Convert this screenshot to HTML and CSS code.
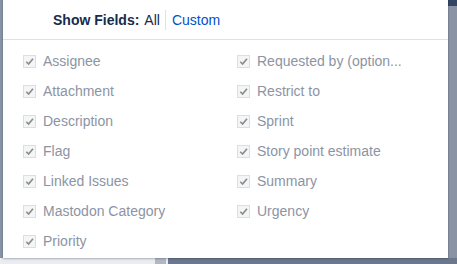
FILE: index.html
```html
<!DOCTYPE html>
<html lang="en">
<head>
  <meta charset="UTF-8" />
  <title>Show Fields</title>
  <link rel="stylesheet" href="styles.css">
</head>
<body>
  <div class="popup">
    <div class="header">
      <span class="label">Show Fields:</span>
      <span class="opt">All</span>
      <span class="sep"></span>
      <a class="opt link">Custom</a>
    </div>
    <div class="fields">
      <label class="field"><span class="box"><svg viewBox="0 0 12 12"><path d="M2.5 6.3 L5 8.8 L9.8 3" /></svg></span><span class="name">Assignee</span></label>
      <label class="field"><span class="box"><svg viewBox="0 0 12 12"><path d="M2.5 6.3 L5 8.8 L9.8 3" /></svg></span><span class="name" title="Requested by (optional)">Requested by (option...</span></label>
      <label class="field"><span class="box"><svg viewBox="0 0 12 12"><path d="M2.5 6.3 L5 8.8 L9.8 3" /></svg></span><span class="name">Attachment</span></label>
      <label class="field"><span class="box"><svg viewBox="0 0 12 12"><path d="M2.5 6.3 L5 8.8 L9.8 3" /></svg></span><span class="name">Restrict to</span></label>
      <label class="field"><span class="box"><svg viewBox="0 0 12 12"><path d="M2.5 6.3 L5 8.8 L9.8 3" /></svg></span><span class="name">Description</span></label>
      <label class="field"><span class="box"><svg viewBox="0 0 12 12"><path d="M2.5 6.3 L5 8.8 L9.8 3" /></svg></span><span class="name">Sprint</span></label>
      <label class="field"><span class="box"><svg viewBox="0 0 12 12"><path d="M2.5 6.3 L5 8.8 L9.8 3" /></svg></span><span class="name">Flag</span></label>
      <label class="field"><span class="box"><svg viewBox="0 0 12 12"><path d="M2.5 6.3 L5 8.8 L9.8 3" /></svg></span><span class="name">Story point estimate</span></label>
      <label class="field"><span class="box"><svg viewBox="0 0 12 12"><path d="M2.5 6.3 L5 8.8 L9.8 3" /></svg></span><span class="name">Linked Issues</span></label>
      <label class="field"><span class="box"><svg viewBox="0 0 12 12"><path d="M2.5 6.3 L5 8.8 L9.8 3" /></svg></span><span class="name">Summary</span></label>
      <label class="field"><span class="box"><svg viewBox="0 0 12 12"><path d="M2.5 6.3 L5 8.8 L9.8 3" /></svg></span><span class="name">Mastodon Category</span></label>
      <label class="field"><span class="box"><svg viewBox="0 0 12 12"><path d="M2.5 6.3 L5 8.8 L9.8 3" /></svg></span><span class="name">Urgency</span></label>
      <label class="field"><span class="box"><svg viewBox="0 0 12 12"><path d="M2.5 6.3 L5 8.8 L9.8 3" /></svg></span><span class="name">Priority</span></label>
    </div>
  </div>
</body>
</html>
```

FILE: styles.css
```css
body {
  margin: 0;
  height: 264px;
  overflow: hidden;
  font-family: 'Liberation Sans', Arial, sans-serif;
  background:
    linear-gradient(to right, #ebecf0 0, #ebecf0 155px, #b3b7bf 155px, #b3b7bf 166px, #ebecf0 166px, #ebecf0 168px, #6b778c 168px) bottom / 100% 6px no-repeat,
    linear-gradient(#344563, #344563) top right / 9px 6px no-repeat,
    #8993a4;
}

.popup {
  margin-left: 3px;
  width: 445px;
  height: 258px;
  background: #fff;
  box-shadow: 0 1px 2px rgba(9, 30, 66, 0.25), 0 0 1px rgba(9, 30, 66, 0.31);
}

.header {
  height: 40px;
  border-bottom: 1px solid #dfe1e6;
  display: flex;
  align-items: center;
  padding: 1px 0 0 50px;
  box-sizing: border-box;
  font-size: 14px;
  color: #172b4d;
}

.header .label {
  font-weight: 700;
  margin-right: 5px;
}

.sep {
  width: 1px;
  height: 20px;
  background: #dfe1e6;
  margin: 0 6px 0 5px;
}

.link {
  color: #0052cc;
}

.fields {
  display: grid;
  grid-template-columns: 214px 180px;
  padding: 6px 0 0 20px;
}

.field {
  height: 30px;
  display: flex;
  align-items: center;
  gap: 7px;
  font-size: 14px;
  color: #8c94a4;
}

.box {
  flex: none;
  width: 11px;
  height: 11px;
  border: 1px solid #dcdee3;
  background: #f4f5f7;
  display: flex;
}

.box svg {
  width: 11px;
  height: 11px;
  fill: none;
  stroke: #8c8c8c;
  stroke-width: 1.8;
}

.name {
  white-space: nowrap;
}
```
